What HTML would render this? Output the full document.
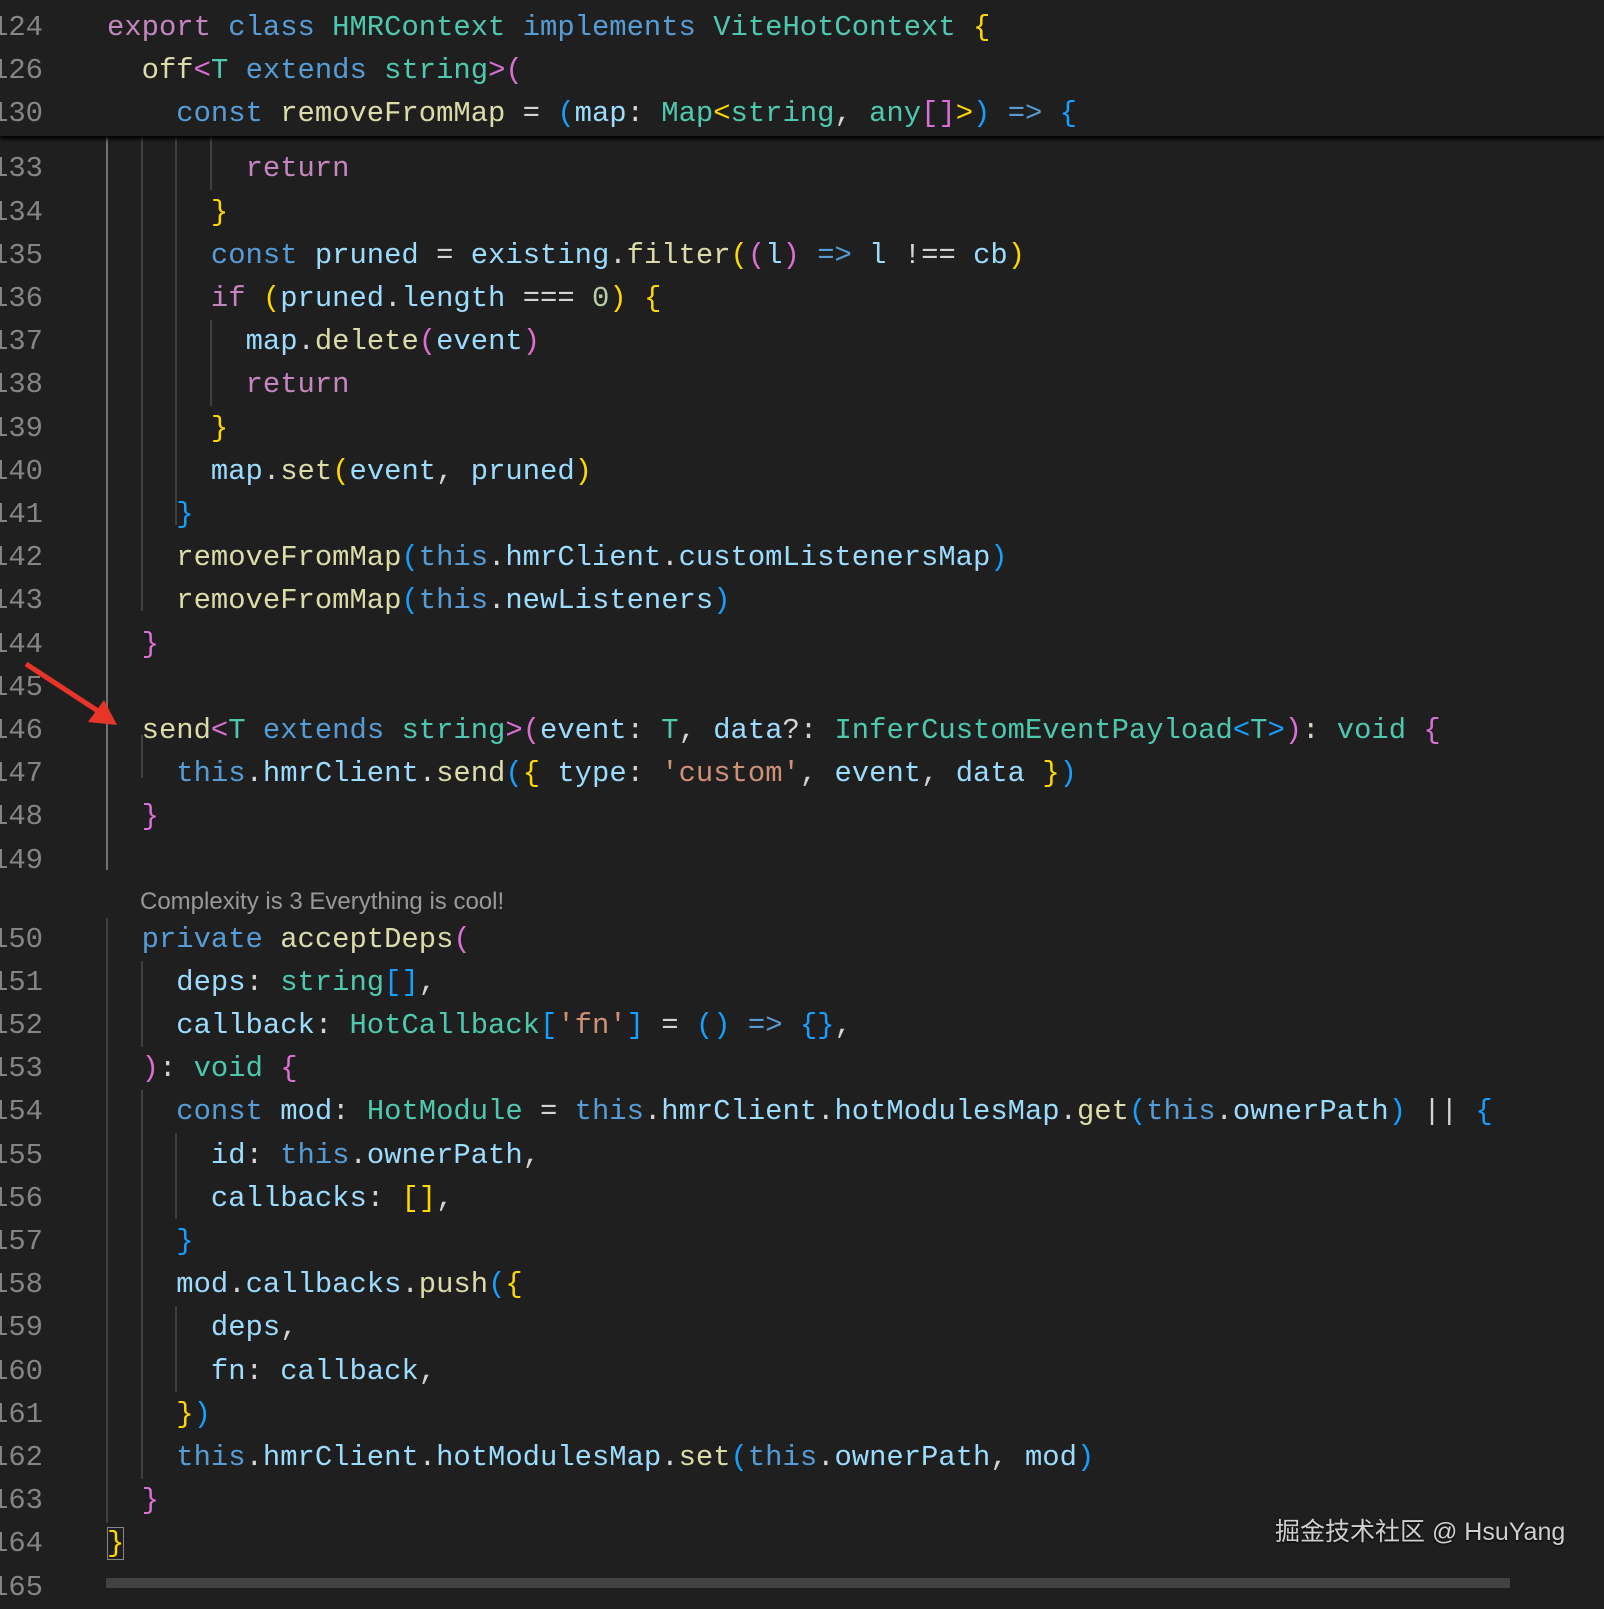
<!DOCTYPE html>
<html><head><meta charset="utf-8"><style>
*{margin:0;padding:0}
body{width:1604px;height:1586px;background:#1f1f1f;overflow:hidden;position:relative;font-family:"Liberation Mono",monospace;font-size:28.86px;color:#d4d4d4}
#w{position:absolute;left:0;top:2px;width:1604px;height:1586px}
.ln{position:absolute;left:-40px;width:83px;text-align:right;color:#858585;height:43.2px;line-height:43.2px;white-space:pre}
.c{position:absolute;left:107px;height:43.2px;line-height:43.2px;white-space:pre}
.g{position:absolute;width:1.5px;background:#404040}
.ga{background:#707070}
.k{color:#c586c0}.b{color:#569cd6}.t{color:#4ec9b0}.f{color:#dcdcaa}.v{color:#9cdcfe}.s{color:#ce9178}.n{color:#b5cea8}
.y{color:#ffd700}.m{color:#da70d6}.l{color:#179fff}
#sticky{position:absolute;left:0;top:-2px;width:1604px;height:136px;background:#1f1f1f;box-shadow:0 3px 4px #000;z-index:5}
</style></head><body><div id="w">
<div id="sticky">
<div class="ln" style="top:6px">124</div><div class="c" style="top:6px"><span class="k">export</span> <span class="b">class</span> <span class="t">HMRContext</span> <span class="b">implements</span> <span class="t">ViteHotContext</span> <span class="y">{</span></div>
<div class="ln" style="top:49.2px">126</div><div class="c" style="top:49.2px">  <span class="f">off</span><span class="m">&lt;</span><span class="t">T</span> <span class="b">extends</span> <span class="t">string</span><span class="m">&gt;(</span></div>
<div class="ln" style="top:92.4px">130</div><div class="c" style="top:92.4px">    <span class="b">const</span> <span class="f">removeFromMap</span> = <span class="l">(</span><span class="v">map</span>: <span class="t">Map</span><span class="y">&lt;</span><span class="t">string</span>, <span class="t">any</span><span class="m">[]</span><span class="y">&gt;</span><span class="l">)</span> <span class="b">=&gt;</span> <span class="l">{</span></div>
</div>

<div class="g ga" style="left:106px;top:134px;height:734px"></div>
<div class="g" style="left:141px;top:134px;height:475px"></div>
<div class="g" style="left:175px;top:134px;height:389px"></div>
<div class="g" style="left:210px;top:134px;height:54px"></div>
<div class="g" style="left:210px;top:318px;height:86px"></div>
<div class="g" style="left:141px;top:733px;height:43px"></div>
<div class="g" style="left:106px;top:916px;height:605px"></div>
<div class="g" style="left:141px;top:959px;height:86px"></div>
<div class="g" style="left:141px;top:1088px;height:389px"></div>
<div class="g" style="left:175px;top:1131px;height:86px"></div>
<div class="g" style="left:175px;top:1304px;height:86px"></div>

<div class="ln" style="top:145.4px">133</div><div class="c" style="top:145.4px">        <span class="k">return</span></div>
<div class="ln" style="top:188.6px">134</div><div class="c" style="top:188.6px">      <span class="y">}</span></div>
<div class="ln" style="top:231.8px">135</div><div class="c" style="top:231.8px">      <span class="b">const</span> <span class="v">pruned</span> = <span class="v">existing</span>.<span class="f">filter</span><span class="y">(</span><span class="m">(</span><span class="v">l</span><span class="m">)</span> <span class="b">=&gt;</span> <span class="v">l</span> !== <span class="v">cb</span><span class="y">)</span></div>
<div class="ln" style="top:275px">136</div><div class="c" style="top:275px">      <span class="k">if</span> <span class="y">(</span><span class="v">pruned</span>.<span class="v">length</span> === <span class="n">0</span><span class="y">)</span> <span class="y">{</span></div>
<div class="ln" style="top:318.2px">137</div><div class="c" style="top:318.2px">        <span class="v">map</span>.<span class="f">delete</span><span class="m">(</span><span class="v">event</span><span class="m">)</span></div>
<div class="ln" style="top:361.4px">138</div><div class="c" style="top:361.4px">        <span class="k">return</span></div>
<div class="ln" style="top:404.6px">139</div><div class="c" style="top:404.6px">      <span class="y">}</span></div>
<div class="ln" style="top:447.8px">140</div><div class="c" style="top:447.8px">      <span class="v">map</span>.<span class="f">set</span><span class="y">(</span><span class="v">event</span>, <span class="v">pruned</span><span class="y">)</span></div>
<div class="ln" style="top:491px">141</div><div class="c" style="top:491px">    <span class="l">}</span></div>
<div class="ln" style="top:534.2px">142</div><div class="c" style="top:534.2px">    <span class="f">removeFromMap</span><span class="l">(</span><span class="b">this</span>.<span class="v">hmrClient</span>.<span class="v">customListenersMap</span><span class="l">)</span></div>
<div class="ln" style="top:577.4px">143</div><div class="c" style="top:577.4px">    <span class="f">removeFromMap</span><span class="l">(</span><span class="b">this</span>.<span class="v">newListeners</span><span class="l">)</span></div>
<div class="ln" style="top:620.6px">144</div><div class="c" style="top:620.6px">  <span class="m">}</span></div>
<div class="ln" style="top:663.8px">145</div>
<div class="ln" style="top:707px">146</div><div class="c" style="top:707px">  <span class="f">send</span><span class="m">&lt;</span><span class="t">T</span> <span class="b">extends</span> <span class="t">string</span><span class="m">&gt;(</span><span class="v">event</span>: <span class="t">T</span>, <span class="v">data</span>?: <span class="t">InferCustomEventPayload</span><span class="l">&lt;</span><span class="t">T</span><span class="l">&gt;</span><span class="m">)</span>: <span class="t">void</span> <span class="m">{</span></div>
<div class="ln" style="top:750.2px">147</div><div class="c" style="top:750.2px">    <span class="b">this</span>.<span class="v">hmrClient</span>.<span class="f">send</span><span class="l">(</span><span class="y">{</span> <span class="v">type</span>: <span class="s">'custom'</span>, <span class="v">event</span>, <span class="v">data</span> <span class="y">}</span><span class="l">)</span></div>
<div class="ln" style="top:793.4px">148</div><div class="c" style="top:793.4px">  <span class="m">}</span></div>
<div class="ln" style="top:836.6px">149</div>

<div style="position:absolute;left:140px;top:882px;height:36px;line-height:36px;font-family:'Liberation Sans',sans-serif;font-size:24px;color:#999">Complexity is 3 Everything is cool!</div>

<div class="ln" style="top:915.6px">150</div><div class="c" style="top:915.6px">  <span class="b">private</span> <span class="f">acceptDeps</span><span class="m">(</span></div>
<div class="ln" style="top:958.8px">151</div><div class="c" style="top:958.8px">    <span class="v">deps</span>: <span class="t">string</span><span class="l">[]</span>,</div>
<div class="ln" style="top:1002px">152</div><div class="c" style="top:1002px">    <span class="v">callback</span>: <span class="t">HotCallback</span><span class="l">[</span><span class="s">'fn'</span><span class="l">]</span> = <span class="l">()</span> <span class="b">=&gt;</span> <span class="l">{}</span>,</div>
<div class="ln" style="top:1045.2px">153</div><div class="c" style="top:1045.2px">  <span class="m">)</span>: <span class="t">void</span> <span class="m">{</span></div>
<div class="ln" style="top:1088.4px">154</div><div class="c" style="top:1088.4px">    <span class="b">const</span> <span class="v">mod</span>: <span class="t">HotModule</span> = <span class="b">this</span>.<span class="v">hmrClient</span>.<span class="v">hotModulesMap</span>.<span class="f">get</span><span class="l">(</span><span class="b">this</span>.<span class="v">ownerPath</span><span class="l">)</span> || <span class="l">{</span></div>
<div class="ln" style="top:1131.6px">155</div><div class="c" style="top:1131.6px">      <span class="v">id</span>: <span class="b">this</span>.<span class="v">ownerPath</span>,</div>
<div class="ln" style="top:1174.8px">156</div><div class="c" style="top:1174.8px">      <span class="v">callbacks</span>: <span class="y">[]</span>,</div>
<div class="ln" style="top:1218px">157</div><div class="c" style="top:1218px">    <span class="l">}</span></div>
<div class="ln" style="top:1261.2px">158</div><div class="c" style="top:1261.2px">    <span class="v">mod</span>.<span class="v">callbacks</span>.<span class="f">push</span><span class="l">(</span><span class="y">{</span></div>
<div class="ln" style="top:1304.4px">159</div><div class="c" style="top:1304.4px">      <span class="v">deps</span>,</div>
<div class="ln" style="top:1347.6px">160</div><div class="c" style="top:1347.6px">      <span class="v">fn</span>: <span class="v">callback</span>,</div>
<div class="ln" style="top:1390.8px">161</div><div class="c" style="top:1390.8px">    <span class="y">}</span><span class="l">)</span></div>
<div class="ln" style="top:1434px">162</div><div class="c" style="top:1434px">    <span class="b">this</span>.<span class="v">hmrClient</span>.<span class="v">hotModulesMap</span>.<span class="f">set</span><span class="l">(</span><span class="b">this</span>.<span class="v">ownerPath</span>, <span class="v">mod</span><span class="l">)</span></div>
<div class="ln" style="top:1477.2px">163</div><div class="c" style="top:1477.2px">  <span class="m">}</span></div>
<div class="ln" style="top:1520.4px">164</div><div class="c" style="top:1520.4px"><span class="y" style="outline:1.5px solid #888;outline-offset:-1px">}</span></div>
<div class="ln" style="top:1563.6px">165</div>

<div style="position:absolute;left:106px;top:1576px;width:1404px;height:10px;background:#424242"></div>

<div style="position:absolute;left:1275px;top:1512px;font-family:'Liberation Sans','Noto Sans CJK SC',sans-serif;font-size:25px;line-height:36px;color:#d0d0d0;text-shadow:0 1px 2px #000;white-space:nowrap">掘金技术社区 @ HsuYang</div>

<svg style="position:absolute;left:0;top:0" width="140" height="760">
<line x1="26" y1="662" x2="98" y2="709" stroke="#e8352a" stroke-width="5"/>
<polygon points="117,723 88,720 104,698" fill="#e8352a"/>
</svg>
</div></body></html>
